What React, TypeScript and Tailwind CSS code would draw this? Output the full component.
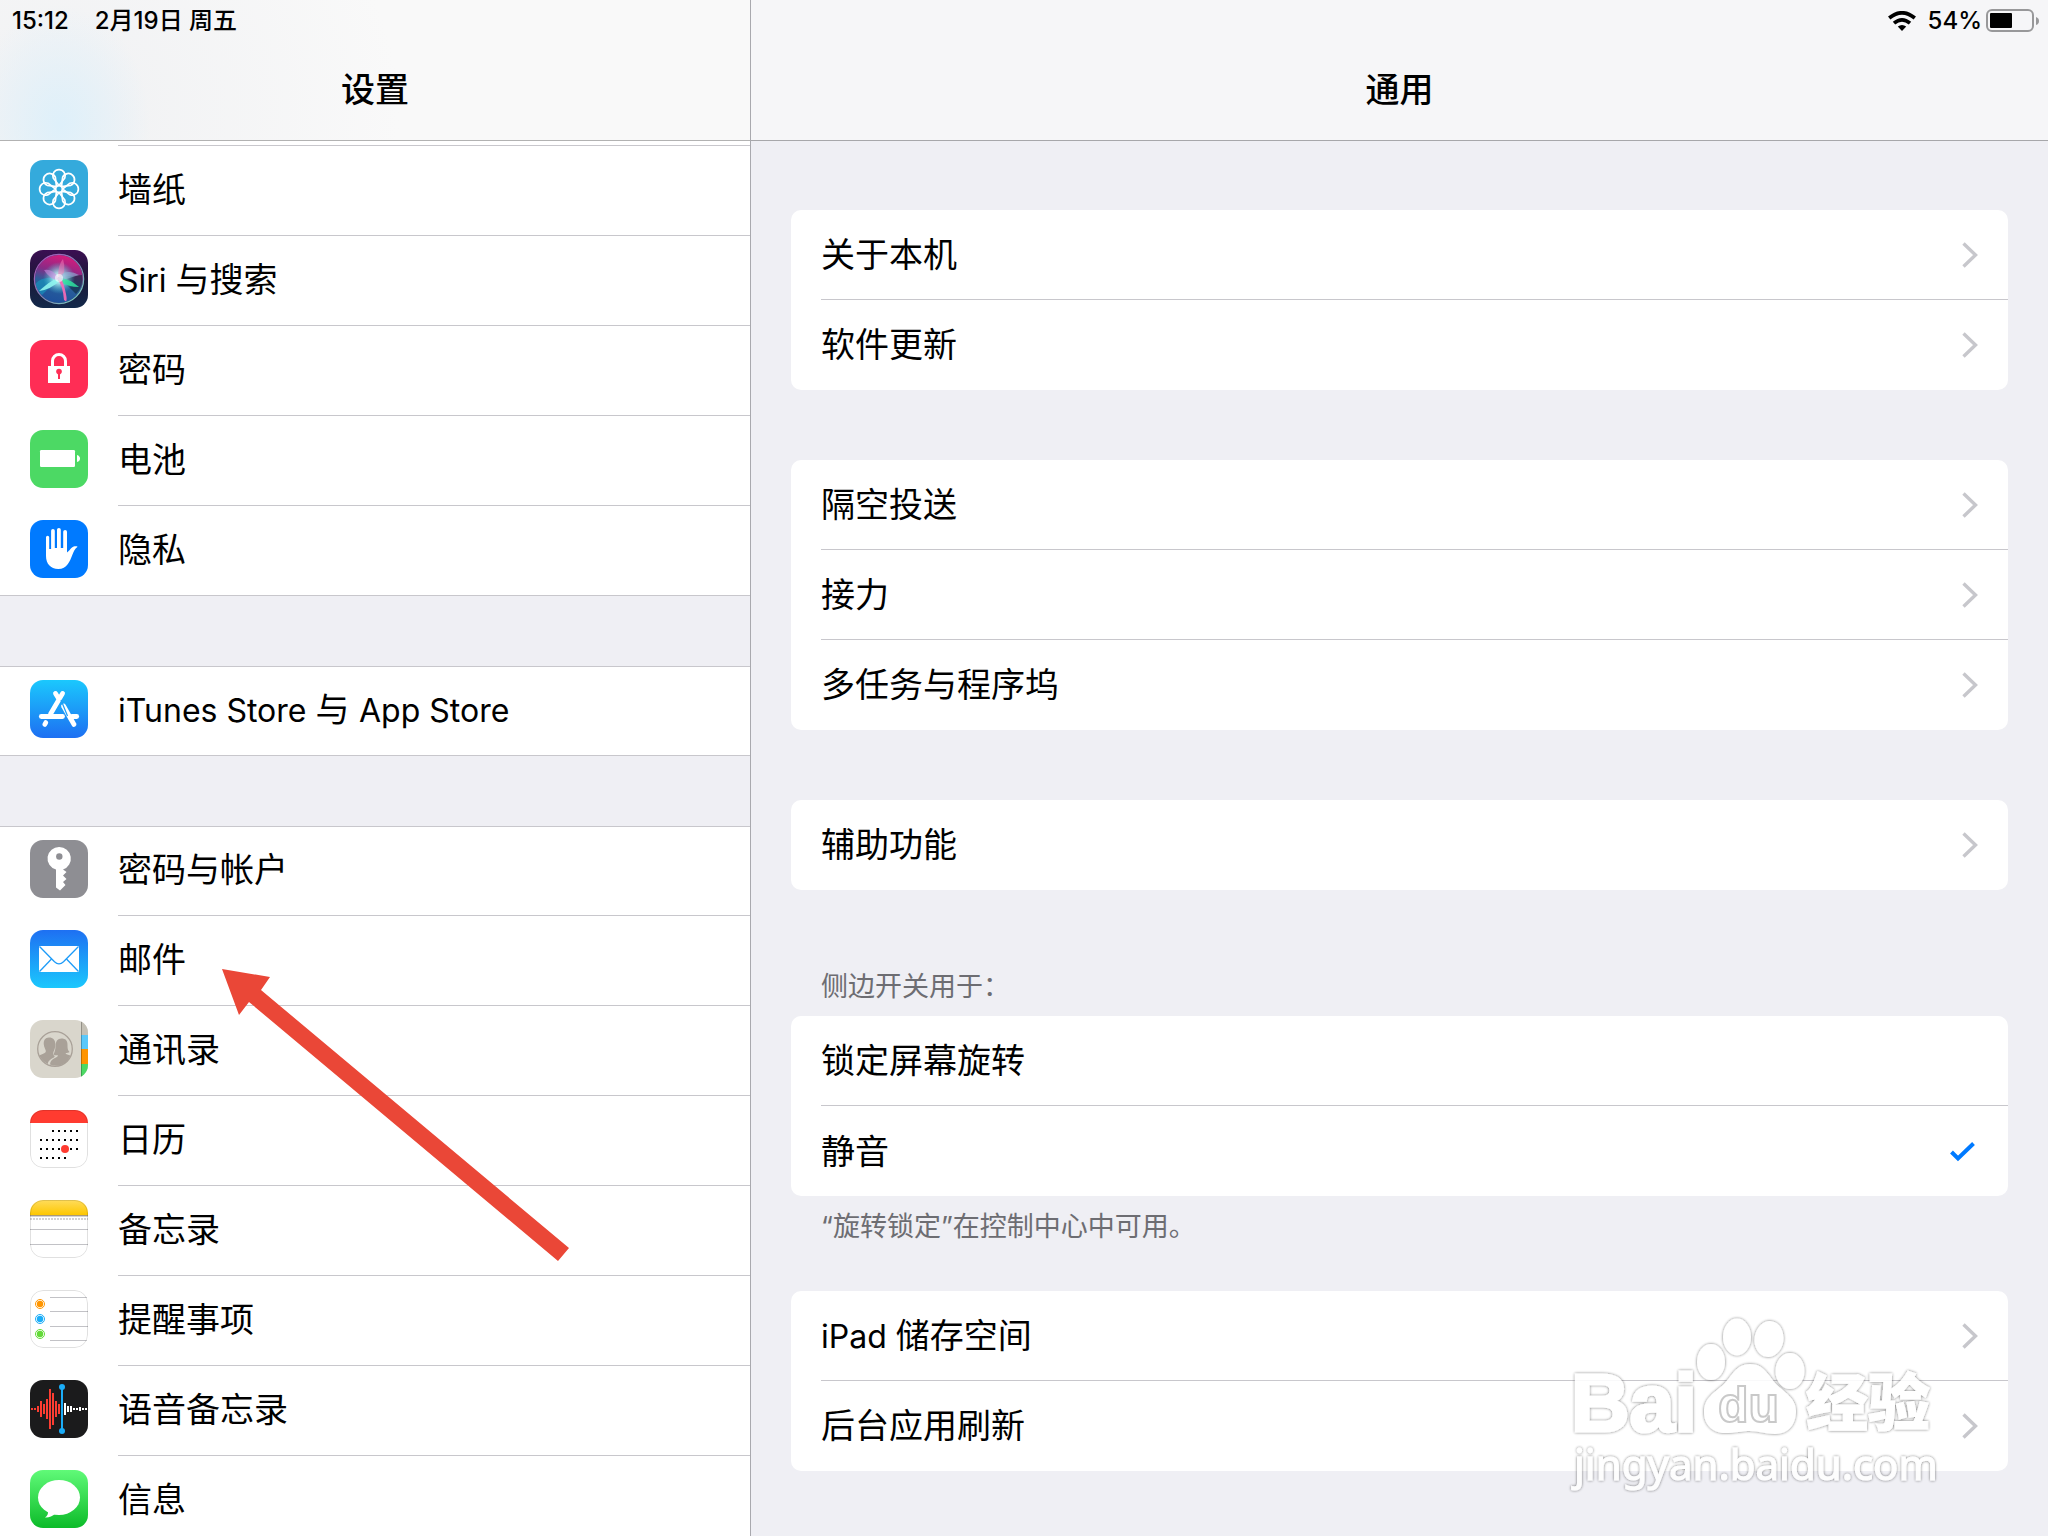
import type { ReactNode } from "react"

type SidebarItem = { name: string; icon: ReactNode }

function Tile({ children }: { children: ReactNode }) {
  return (
    <svg viewBox="0 0 58 58" className="size-[58px] shrink-0" aria-hidden="true">
      <defs>
        <clipPath id="tile">
          <rect width="58" height="58" rx="13" />
        </clipPath>
      </defs>
      <g clipPath="url(#tile)">{children}</g>
    </svg>
  )
}

function WallpaperIcon() {
  return (
    <Tile>
      <rect width="58" height="58" fill="#34aadc" />
      <g fill="none" stroke="#fff" strokeWidth="1.7" strokeLinejoin="round">
        {[0, 45, 90, 135, 180, 225, 270, 315].map((angle) => (
          <path key={angle} d="M29 25.5 L23.2 18 A6.2 6.2 0 1 1 34.8 18 Z" transform={`rotate(${angle} 29 29)`} />
        ))}
        <circle cx="29" cy="29" r="3.4" />
      </g>
    </Tile>
  )
}

function SiriIcon() {
  return (
    <Tile>
      <defs>
        <linearGradient id="siri-bg" x1="0" y1="0" x2="0" y2="1">
          <stop offset="0" stopColor="#3b0f52" />
          <stop offset="0.5" stopColor="#1b1838" />
          <stop offset="1" stopColor="#13294b" />
        </linearGradient>
        <linearGradient id="siri-orb" x1="0.6" y1="0" x2="0.35" y2="1">
          <stop offset="0" stopColor="#d81b7c" />
          <stop offset="0.35" stopColor="#8a2a86" />
          <stop offset="0.6" stopColor="#2a5f9a" />
          <stop offset="1" stopColor="#1d4f9c" />
        </linearGradient>
        <radialGradient id="siri-glow">
          <stop offset="0" stopColor="#fff" />
          <stop offset="0.35" stopColor="#b8f6f5" stopOpacity="0.8" />
          <stop offset="1" stopColor="#38c8d8" stopOpacity="0" />
        </radialGradient>
        <linearGradient id="siri-ring" x1="0" y1="0" x2="1" y2="1">
          <stop offset="0" stopColor="#b04ab8" />
          <stop offset="0.6" stopColor="#7c8fb8" />
          <stop offset="1" stopColor="#7ce0c0" />
        </linearGradient>
      </defs>
      <rect width="58" height="58" fill="url(#siri-bg)" />
      <circle cx="29" cy="29" r="24" fill="url(#siri-orb)" />
      <path d="M29 27 L52 25 Q54 36 46 44 Z" fill="#0d2a3a" opacity="0.6" />
      <path d="M29 28 Q12 26 5 34 Q8 42 12 45 Z" fill="#12a5c8" opacity="0.5" />
      <circle cx="29" cy="28" r="16" fill="url(#siri-glow)" />
      <path d="M29 27 Q20 31 9 41 Q20 40 31 30 Z" fill="#8ff5ee" opacity="0.9" />
      <path d="M28 27 Q40 29 49 37 Q38 37 28 31 Z" fill="#2fe3a0" opacity="0.85" />
      <path d="M27 28 Q33 36 34 50 Q38 54 36 44 Q34 34 31 28 Z" fill="#f06ab6" opacity="0.95" />
      <path d="M29 28 Q22 18 14 20 Q20 30 29 30 Z" fill="#c98be0" opacity="0.6" />
      <path d="M28 29 Q28 14 33 9 Q37 22 30 30 Z" fill="#f074b4" opacity="0.55" />
      <path d="M28 28 Q36 18 49 25 Q40 28 29 31 Z" fill="#8fb7d8" opacity="0.6" />
      <circle cx="29" cy="28" r="4" fill="#fff" opacity="0.6" />
      <circle cx="29" cy="29" r="24.6" fill="none" stroke="url(#siri-ring)" strokeWidth="1.3" />
    </Tile>
  )
}

function PasscodeIcon() {
  return (
    <Tile>
      <rect width="58" height="58" fill="#ff2d55" />
      <path d="M22.5 27 V21 a6.5 6.5 0 0 1 13 0 V27" fill="none" stroke="#fff" strokeWidth="3" />
      <rect x="18" y="26" width="22" height="17" fill="#fff" />
      <circle cx="29" cy="31.6" r="2.8" fill="#ff2d55" />
      <rect x="28" y="33" width="2" height="6" fill="#ff2d55" />
    </Tile>
  )
}

function BatteryTileIcon() {
  return (
    <Tile>
      <rect width="58" height="58" fill="#4cd964" />
      <rect x="10" y="20" width="35" height="17" rx="1.2" fill="#fff" />
      <path d="M47 25 q3 1 3 3.5 t-3 3.5 Z" fill="#fff" />
    </Tile>
  )
}

function PrivacyIcon() {
  return (
    <Tile>
      <rect width="58" height="58" fill="#007aff" />
      <path
        d="M16 17.3 a1.6 1.6 0 0 1 3.2 0 V29 h1.9 V10.8 a1.8 1.8 0 0 1 3.7 0 V28 h2.2 V9.8 a1.9 1.9 0 0 1 3.8 0 V28 h2.4 V11.8 a1.9 1.9 0 0 1 3.8 0 V32.5 C39 31 40.5 28.5 42 27.4 C43.5 26.3 46 25.8 47.6 26.7 C44.5 28.6 43.6 32 42.3 35 C40 41 37 49 28.3 49 C20.5 49 16 43.5 16 36 Z"
        fill="#fff"
      />
    </Tile>
  )
}

function AppStoreIcon() {
  return (
    <Tile>
      <defs>
        <linearGradient id="store-bg" x1="0" y1="0" x2="0" y2="1">
          <stop offset="0" stopColor="#1bc8fd" />
          <stop offset="1" stopColor="#1d6ff2" />
        </linearGradient>
      </defs>
      <rect width="58" height="58" fill="url(#store-bg)" />
      <g fill="none" stroke="#fff" strokeWidth="4.8" strokeLinecap="round">
        <path d="M32.6 13.4 L20.5 34" />
        <path d="M25.5 13.4 L28 17.5" />
        <path d="M33.5 26 L44 44.5" />
        <path d="M11.3 36.5 H32.5" />
        <path d="M42 36.5 H46.7" />
        <path d="M15.8 42.6 L14.8 44.4" />
      </g>
      <path d="M31 20 L37.5 36" stroke="#1c9ff8" strokeWidth="1.2" fill="none" />
    </Tile>
  )
}

function KeyIcon() {
  return (
    <Tile>
      <rect width="58" height="58" fill="#8e8e93" />
      <path
        d="M29.3 7 a11.5 11.5 0 0 0 -3.3 22.6 V47.5 L30 50.5 L35.5 45 L33 42 L36.5 39 L33 35.5 L36.5 32 L33 29.4 A11.5 11.5 0 0 0 29.3 7 Z"
        fill="#fff"
      />
      <circle cx="29.3" cy="16.5" r="3.2" fill="#8e8e93" />
    </Tile>
  )
}

function MailIcon() {
  return (
    <Tile>
      <defs>
        <linearGradient id="mail-bg" x1="0" y1="0" x2="0" y2="1">
          <stop offset="0" stopColor="#1e70f2" />
          <stop offset="1" stopColor="#1bc8fd" />
        </linearGradient>
      </defs>
      <rect width="58" height="58" fill="url(#mail-bg)" />
      <rect x="9" y="16" width="40" height="26" rx="0.8" fill="#fff" />
      <g fill="none" stroke="#1d9bf8" strokeWidth="1.3">
        <path d="M9.5 16.5 L24.5 31.8 Q29 36 33.5 31.8 L48.5 16.5" />
        <path d="M9.5 41.5 L21.5 29" />
        <path d="M48.5 41.5 L36.5 29" />
      </g>
    </Tile>
  )
}

function ContactsIcon() {
  return (
    <Tile>
      <rect width="58" height="58" fill="#d9d6cc" />
      <rect x="51" width="7" height="15" fill="#c4c0b5" />
      <rect x="51" y="15" width="7" height="14" fill="#5ac8fa" />
      <rect x="51" y="29" width="7" height="15" fill="#ff9500" />
      <rect x="51" y="44" width="7" height="14" fill="#4cd964" />
      <rect x="51" width="1" height="58" fill="#000" opacity="0.25" />
      <circle cx="25" cy="29" r="17.3" fill="none" stroke="#a9a198" strokeWidth="1.3" />
      <path
        d="M19 17.5 c-4 0 -5.6 3 -5.2 7 c0.3 3 1.6 4.4 2 6.2 c0.3 2.6 -3.6 3.4 -6.6 4.8 c2 4 5 6.7 8.6 8.6 c0.4 -5 6.4 -5.4 7 -8 c-1.4 -0.6 -2 -2.4 -1.3 -4.4 c1 -2 1.8 -4 1.8 -7.5 c0 -4.4 -2.3 -6.7 -6.3 -6.7 Z"
        fill="#a9a198"
      />
      <path
        d="M31.5 18.5 c-4 0 -6 3 -6 7.5 c0 4 -1 6 -2 8.5 c1.5 1 3 0.8 4.5 0.7 c0 3 -8 2.8 -8 9.3 c8 3.5 17 0 20.5 -9 c-2.5 -1 -4.5 -1 -5 -2.5 c1.5 0 3 -0.3 4 -1 c-2 -2 -2 -4 -2 -7 c0 -4.5 -2 -6.5 -6 -6.5 Z"
        fill="#a9a198"
      />
    </Tile>
  )
}

const calendarDots = [
  { y: 21, from: 2, to: 6 },
  { y: 30, from: 0, to: 6 },
  { y: 39, from: 0, to: 6 },
  { y: 48, from: 0, to: 4 },
]

function TileOutline() {
  return <rect x="0.5" y="0.5" width="57" height="57" rx="12.5" fill="none" stroke="#000" strokeOpacity="0.12" />
}

function CalendarIcon() {
  return (
    <Tile>
      <rect width="58" height="58" fill="#fff" />
      <rect width="58" height="13" fill="#ff3b30" />
      {calendarDots.map((row) =>
        Array.from({ length: row.to - row.from + 1 }, (_, i) => (
          <rect key={`${row.y}-${i}`} x={10 + (row.from + i) * 6} y={row.y - 1} width="2" height="2" fill="#000" />
        )),
      )}
      <circle cx="35" cy="39" r="4" fill="#ff3b30" />
      <TileOutline />
    </Tile>
  )
}

function NotesIcon() {
  return (
    <Tile>
      <defs>
        <linearGradient id="notes-bg" x1="0" y1="0" x2="0" y2="1">
          <stop offset="0" stopColor="#ffdc5c" />
          <stop offset="1" stopColor="#fdc700" />
        </linearGradient>
      </defs>
      <rect width="58" height="58" fill="#fff" />
      <rect width="58" height="15" fill="url(#notes-bg)" />
      <rect y="15" width="58" height="1" fill="#a99a78" />
      <rect y="16" width="58" height="1" fill="#d4d4d4" />
      <path d="M0 19 H58" stroke="#d2d2d2" strokeWidth="2" strokeDasharray="2 1" />
      <path d="M0 29.5 H58 M0 44.5 H58" stroke="#c2c2c6" strokeWidth="1" />
      <TileOutline />
    </Tile>
  )
}

function RemindersIcon() {
  return (
    <Tile>
      <rect width="58" height="58" fill="#fff" />
      {["#ff9500", "#1badf8", "#63da38"].map((color, i) => (
        <g key={color}>
          <circle cx="10" cy={14 + i * 15} r="4.5" fill="none" stroke={color} strokeWidth="1" />
          <circle cx="10" cy={14 + i * 15} r="3.2" fill={color} />
        </g>
      ))}
      <path d="M20 7.5 H57 M20 21.5 H58 M20 36.5 H58 M20 50.5 H57" stroke="#c2c2c6" strokeWidth="1" />
      <TileOutline />
    </Tile>
  )
}

const redWave = [1, 1, 3, 8, 5, 10, 20, 16, 8, 5]
const whiteWave = [6, 3, 3, 1, 1, 2, 1, 1]

function VoiceMemosIcon() {
  return (
    <Tile>
      <rect width="58" height="58" fill="#1b1b1c" />
      {redWave.map((h, i) => (
        <rect key={i} x={1 + i * 3} y={29 - h} width="2" height={h * 2} fill="#fc3d32" />
      ))}
      {whiteWave.map((h, i) => (
        <rect key={i} x={34 + i * 3} y={29 - h} width="2" height={h * 2} fill="#fff" />
      ))}
      <rect x="31" y="7" width="2" height="44" fill="#1badf8" />
      <circle cx="32" cy="7" r="3" fill="#1badf8" />
      <circle cx="32" cy="51" r="3" fill="#1badf8" />
    </Tile>
  )
}

function MessagesIcon() {
  return (
    <Tile>
      <defs>
        <linearGradient id="messages-bg" x1="0" y1="0" x2="0" y2="1">
          <stop offset="0" stopColor="#60fa78" />
          <stop offset="1" stopColor="#0cbb29" />
        </linearGradient>
      </defs>
      <rect width="58" height="58" fill="url(#messages-bg)" />
      <ellipse cx="29" cy="27.5" rx="21" ry="17.5" fill="#fff" />
      <path d="M18 41 Q18.5 45 15 47.5 Q20.5 48 25.5 43.5 Z" fill="#fff" />
    </Tile>
  )
}

const sidebarGroups: SidebarItem[][] = [
  [
    { name: "墙纸", icon: <WallpaperIcon /> },
    { name: "Siri 与搜索", icon: <SiriIcon /> },
    { name: "密码", icon: <PasscodeIcon /> },
    { name: "电池", icon: <BatteryTileIcon /> },
    { name: "隐私", icon: <PrivacyIcon /> },
  ],
  [{ name: "iTunes Store 与 App Store", icon: <AppStoreIcon /> }],
  [
    { name: "密码与帐户", icon: <KeyIcon /> },
    { name: "邮件", icon: <MailIcon /> },
    { name: "通讯录", icon: <ContactsIcon /> },
    { name: "日历", icon: <CalendarIcon /> },
    { name: "备忘录", icon: <NotesIcon /> },
    { name: "提醒事项", icon: <RemindersIcon /> },
    { name: "语音备忘录", icon: <VoiceMemosIcon /> },
    { name: "信息", icon: <MessagesIcon /> },
  ],
]

// Latin words are set a little smaller so they sit level with the Chinese text
function Label({ text }: { text: string }) {
  return text.split(/([A-Za-z][A-Za-z ]*)/).map((part, i) =>
    i % 2 === 1 ? (
      <span key={i} className="text-[32px]">
        {part}
      </span>
    ) : (
      part
    ),
  )
}

function SidebarGroup({ items, scrolled }: { items: SidebarItem[]; scrolled: boolean }) {
  return (
    <ul className={scrolled ? "border-b border-[#c8c7cc] bg-white" : "border-y border-[#c8c7cc] bg-white"}>
      {/* tail of the row hidden under the header */}
      {scrolled && <li className="ml-[118px] h-[5px] border-b border-[#c8c7cc]"></li>}
      {items.map((item) => (
        <li key={item.name} className="group">
          <a
            href="#"
            className={
              scrolled
                ? "flex h-[90px] gap-[30px] pl-[30px] pt-[14px] group-last:h-[89px]"
                : "flex h-[90px] gap-[30px] pl-[30px] pt-[14px] group-first:h-[89px] group-first:pt-[13px] group-only:h-[88px]"
            }
          >
            {item.icon}
            <span className="flex-1 border-b border-[#c8c7cc] leading-[60px] group-last:border-b-0">
              <Label text={item.name} />
            </span>
          </a>
        </li>
      ))}
    </ul>
  )
}

function Chevron() {
  return (
    <svg viewBox="0 0 16 26" className="h-[26px] w-4" aria-hidden="true">
      <path d="M1.5 1.5 L13.5 13 L1.5 24.5" fill="none" stroke="#c7c7cc" strokeWidth="3.4" />
    </svg>
  )
}

function Card({ rows }: { rows: string[] }) {
  return (
    <ul className="rounded-[10px] bg-white pl-[30px]">
      {rows.map((row) => (
        <li key={row} className="h-[90px] border-b border-[#c8c7cc] last:border-b-0">
          <a href="#" className="flex h-[89px] items-center justify-between pr-[30px]">
            <span>
              <Label text={row} />
            </span>
            <Chevron />
          </a>
        </li>
      ))}
    </ul>
  )
}

function SideSwitch() {
  return (
    <fieldset>
      <legend className="pb-[11px] pl-[30px] text-[27px] leading-[36px] text-[#6d6d72]">侧边开关用于：</legend>
      <div className="rounded-[10px] bg-white pl-[30px]">
        {["锁定屏幕旋转", "静音"].map((option) => (
          <label
            key={option}
            className="flex h-[90px] items-center justify-between border-b border-[#c8c7cc] pr-[30px] last:border-b-0"
          >
            <span>{option}</span>
            <input
              type="radio"
              name="side-switch"
              className="peer ml-auto size-px appearance-none"
              defaultChecked={option === "静音"}
            />
            <svg viewBox="0 0 28 22" className="hidden h-[22px] w-7 peer-checked:block" aria-hidden="true">
              <path d="M1.5 12 L8 18.5 L23.5 3.5" fill="none" stroke="#007aff" strokeWidth="4" />
            </svg>
          </label>
        ))}
      </div>
    </fieldset>
  )
}

function Watermark() {
  return (
    <svg
      viewBox="0 0 380 190"
      className="pointer-events-none absolute right-[106px] bottom-[36px] h-[190px] w-[380px] opacity-90"
      aria-hidden="true"
    >
      <defs>
        <filter id="mark-edge" x="-5%" y="-5%" width="110%" height="110%">
          <feDropShadow dx="0" dy="0" stdDeviation="1.4" floodColor="#000" floodOpacity="0.6" />
        </filter>
      </defs>
      <g fill="#fff" filter="url(#mark-edge)">
        <text
          x="9"
          y="121"
          fontSize="81"
          fontWeight="700"
          stroke="#fff"
          strokeWidth="3"
          fontFamily="'Liberation Sans', sans-serif"
        >
          Bai
        </text>
        <ellipse cx="149" cy="52" rx="14" ry="18" />
        <ellipse cx="175" cy="27" rx="14" ry="18.5" />
        <ellipse cx="207" cy="29" rx="14.5" ry="18" transform="rotate(8 207 29)" />
        <ellipse cx="228" cy="61" rx="14.5" ry="18" />
        <path d="M188 54 C174 54 170 66 162 74 C152 83 142 88 142 102 C142 116 152 123 163 123 C174 123 180 121 188 121 C197 121 203 124 213 124 C226 124 234 115 234 101 C234 88 222 82 214 74 C206 65 202 54 188 54 Z" />
        <text
          x="244"
          y="116"
          fontSize="62"
          fontWeight="900"
          stroke="#fff"
          strokeWidth="1"
          fontFamily="'Noto Sans CJK SC', sans-serif"
        >
          经验
        </text>
        <text x="12" y="170" fontSize="42" stroke="#fff" strokeWidth="1" fontFamily="'Noto Sans', sans-serif">
          jingyan.baidu.com
        </text>
      </g>
      <text
        x="156"
        y="112"
        fontSize="50"
        fontWeight="700"
        fill="#fff"
        stroke="#c4c4c4"
        strokeWidth="2"
        fontFamily="'Liberation Sans', sans-serif"
      >
        du
      </text>
    </svg>
  )
}

export default function App() {
  return (
    <div
      lang="zh-CN"
      className="relative flex h-screen overflow-hidden bg-[#efeff4] font-['Inter','Noto_Sans_CJK_SC',sans-serif] text-[34px] text-black"
    >
      {/* Sidebar */}
      <aside className="flex w-[751px] shrink-0 flex-col border-r border-[#a9a9ae]">
        <header className="h-[141px] shrink-0 border-b border-[#b2b2b2] bg-[#f9f9f9] bg-[radial-gradient(ellipse_90px_120px_at_60px_125px,#def0fa,transparent),radial-gradient(ellipse_340px_300px_at_60px_110px,#f0f1f3,transparent)]">
          <div className="flex h-10 items-center gap-[26px] pt-0.5 pl-3 text-[24px] font-medium">
            <span>15:12</span>
            <span>2月19日 周五</span>
          </div>
          <h1 className="text-center leading-[100px] font-medium">设置</h1>
        </header>
        <nav className="flex flex-col gap-[70px]">
          {sidebarGroups.map((items, i) => (
            <SidebarGroup key={i} items={items} scrolled={i === 0} />
          ))}
        </nav>
      </aside>

      {/* Detail pane */}
      <main className="flex-1">
        <header className="h-[141px] border-b border-[#a7a7aa] bg-[#f6f6f8]">
          <div className="flex h-10 items-center justify-end pt-0.5 pr-2 text-[24px] font-medium">
            <svg viewBox="0 0 28 20" className="mr-3 h-5 w-7" aria-hidden="true">
              <path d="M14 20 L9.8 15.6 Q14 12.3 18.2 15.6 Z" />
              <g fill="none" stroke="#000" strokeWidth="3.7">
                <path d="M6 12.2 Q14 5.4 22 12.2" />
                <path d="M1.2 7 Q14 -3.4 26.8 7" />
              </g>
            </svg>
            <span>54%</span>
            <svg viewBox="0 0 54 24" className="ml-1 h-6 w-[54px]" aria-hidden="true">
              <rect x="1" y="1" width="46" height="21" rx="5" fill="none" stroke="#98989a" strokeWidth="2" />
              <rect x="4" y="4" width="22" height="15" rx="1" />
              <path d="M50 8 q3 1 3 4 t-3 4 Z" fill="#98989a" />
            </svg>
          </div>
          <h2 className="text-center leading-[100px] font-medium">通用</h2>
        </header>
        <div className="flex flex-col px-10 pt-[69px]">
          <div className="flex flex-col gap-[70px]">
            <Card rows={["关于本机", "软件更新"]} />
            <Card rows={["隔空投送", "接力", "多任务与程序坞"]} />
            <Card rows={["辅助功能"]} />
          </div>
          <div className="pt-[79px]">
            <SideSwitch />
          </div>
          <p className="pt-[13px] pb-[46px] pl-[30px] text-[27px] leading-[36px] text-[#6d6d72]">
            “旋转锁定”在控制中心中可用。
          </p>
          <Card rows={["iPad 储存空间", "后台应用刷新"]} />
        </div>
      </main>

      {/* Pointer to the mail row */}
      <svg
        viewBox="0 0 347 292"
        className="pointer-events-none absolute top-[969px] left-[222px] h-[292px] w-[347px]"
        aria-hidden="true"
      >
        <path d="M0 0 L48 8 L39 21 L347 279 L336 292 L27 33 L17 46 Z" fill="#ea4737" />
      </svg>
      <Watermark />
    </div>
  )
}
